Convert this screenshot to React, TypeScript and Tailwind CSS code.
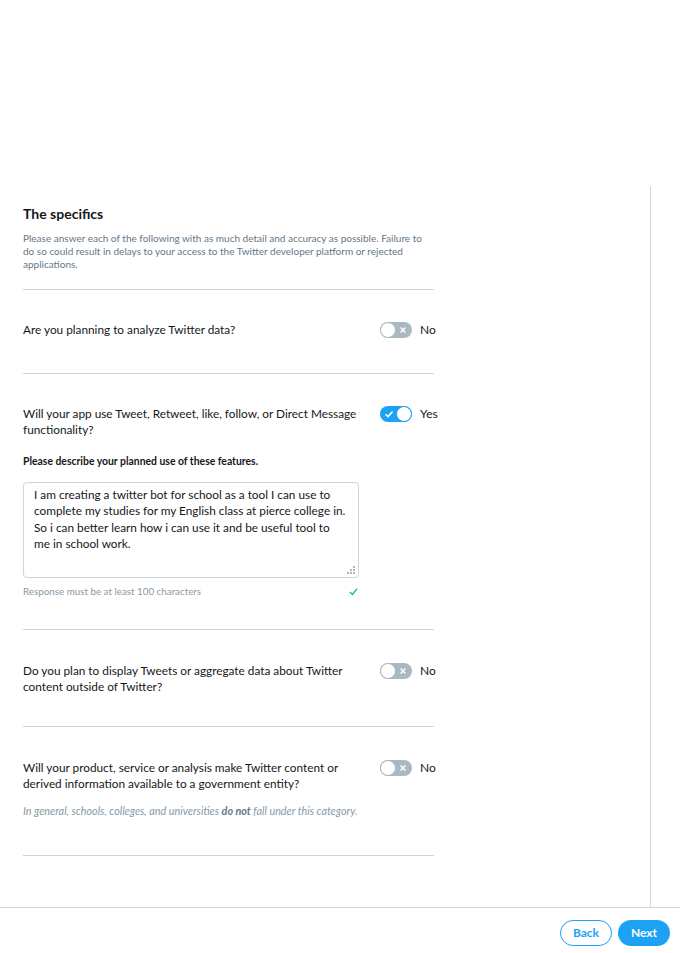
import type { ReactNode } from 'react'

const font = { fontFamily: 'Lato, "Open Sans", sans-serif' }

function Toggle({ on }: { on: boolean }) {
  if (on) {
    return (
      <div className="relative h-4 w-8 shrink-0 rounded-full bg-[#1da1f2]">
        <svg viewBox="0 0 10 10" className="absolute left-[4px] top-[3px] h-[10px] w-[10px]">
          <path d="M1.5 5.2 L4 7.6 L8.6 2.4" fill="none" stroke="white" strokeWidth="1.5" />
        </svg>
        <div className="absolute right-0 top-0 h-4 w-4 rounded-full border border-[#1da1f2] bg-white" />
      </div>
    )
  }
  return (
    <div className="relative h-4 w-8 shrink-0 rounded-full bg-[#aab8c2]">
      <div className="absolute left-0 top-0 h-4 w-4 rounded-full border border-[#aab8c2] bg-white" />
      <svg viewBox="0 0 10 10" className="absolute right-[5px] top-[4px] h-2 w-2">
        <path d="M2 2 L8 8 M8 2 L2 8" stroke="white" strokeWidth="1.8" />
      </svg>
    </div>
  )
}

function Question({ text, on, children }: { text: ReactNode; on: boolean; children?: ReactNode }) {
  return (
    <div>
      <div className="grid grid-cols-[357px_1fr] items-start">
        <p className="pr-[12px] text-[11.8px] leading-4 text-[#14171a]">{text}</p>
        <div className="flex items-center gap-2">
          <Toggle on={on} />
          <span className="text-[12px] leading-4 text-[#14171a]">{on ? 'Yes' : 'No'}</span>
        </div>
      </div>
      {children}
    </div>
  )
}

export default function App() {
  return (
    <div className="flex h-[953px] w-[680px] flex-col bg-white" style={font}>
      <div className="h-[186px] shrink-0" />
      <div className="flex min-h-0 flex-1">
        <div className="w-[651px] border-r border-[#ccd6dd]">
          <div className="w-[434px] pl-[23px]">
            <h2 className="pt-[18px] text-[14px] font-bold leading-5 text-[#14171a]">The specifics</h2>
            <p className="mt-[8px] text-[10px] leading-[13px] text-[#657786]">
              Please answer each of the following with as much detail and accuracy as possible. Failure to do so could
              result in delays to your access to the Twitter developer platform or rejected applications.
            </p>

            <div className="mt-[18px] border-t border-[#ccd6dd] pb-[35px] pt-[32px]">
              <Question text="Are you planning to analyze Twitter data?" on={false} />
            </div>

            <div className="border-t border-[#ccd6dd] pb-[32px] pt-[32px]">
              <Question text="Will your app use Tweet, Retweet, like, follow, or Direct Message functionality?" on>
                <p className="mt-[17px] text-[10.4px] font-bold leading-[13px] text-[#14171a]">
                  Please describe your planned use of these features.
                </p>
                <div className="relative mt-[14px] h-[96px] w-[336px] rounded border border-[#ccd6dd] pl-[10px] pr-[12px] pt-[4px] text-[11.8px] leading-[16.4px] text-[#14171a]">
                  I am creating a twitter bot for school as a tool I can use to complete my studies for my English class
                  at pierce college in. So i can better learn how i can use it and be useful tool to me in school work.
                  <svg viewBox="0 0 8 8" className="absolute bottom-[3px] right-[3px] h-2 w-2" fill="#aab8c2">
                    <rect x="6" y="0" width="2" height="2" />
                    <rect x="3" y="3" width="2" height="2" />
                    <rect x="6" y="3" width="2" height="2" />
                    <rect x="0" y="6" width="2" height="2" />
                    <rect x="3" y="6" width="2" height="2" />
                    <rect x="6" y="6" width="2" height="2" />
                  </svg>
                </div>
                <div className="mt-[7px] flex w-[336px] items-center justify-between">
                  <span className="text-[9.8px] leading-3 text-[#8899a6]">Response must be at least 100 characters</span>
                  <svg viewBox="0 0 10 10" className="mr-[1px] h-[9px] w-[9px]">
                    <path d="M1 5.5 L3.8 8.2 L9 1.8" fill="none" stroke="#17bf63" strokeWidth="1.5" />
                  </svg>
                </div>
              </Question>
            </div>

            <div className="border-t border-[#ccd6dd] pb-[31px] pt-[33px]">
              <Question
                text="Do you plan to display Tweets or aggregate data about Twitter content outside of Twitter?"
                on={false}
              />
            </div>

            <div className="border-t border-[#ccd6dd] pb-[38px] pt-[33px]">
              <Question
                text="Will your product, service or analysis make Twitter content or derived information available to a government entity?"
                on={false}
              >
                <p className="mt-[13px] text-[10.8px] italic leading-3 text-[#8899a6]">
                  In general, schools, colleges, and universities <b className="text-[#657786]">do not</b> fall under
                  this category.
                </p>
              </Question>
            </div>
            <div className="border-t border-[#ccd6dd]" />
          </div>
        </div>
      </div>
      <div className="flex h-[46px] shrink-0 justify-end gap-[6px] border-t border-[#ccd6dd] pr-[10px] pt-[12px]">
        <button className="h-[26px] w-[52px] rounded-full border border-[#1da1f2] bg-white text-[12px] font-bold text-[#1da1f2]">
          Back
        </button>
        <button className="h-[26px] w-[52px] rounded-full bg-[#1da1f2] text-[12px] font-bold text-white">Next</button>
      </div>
    </div>
  )
}
